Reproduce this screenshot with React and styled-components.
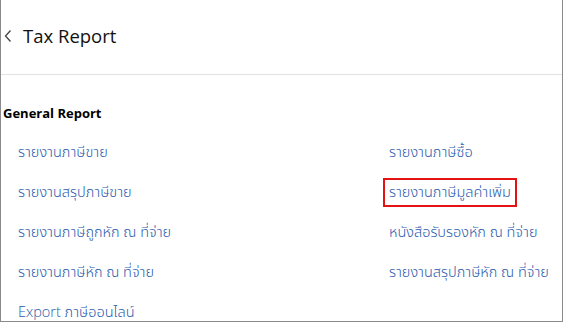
import React from "react";
import styled, { createGlobalStyle } from "styled-components";

const Global = createGlobalStyle`
  html, body { margin: 0; padding: 0; background: #fff; }
  body { font-family: "Segoe UI", "Open Sans", "Noto Sans", "Noto Sans Thai", Tahoma, sans-serif; }
`;

const Frame = styled.div`
  box-sizing: border-box;
  width: 563px;
  height: 322px;
  border-left: 1px solid #8a8a8a;
  border-right: 1px solid #8a8a8a;
  border-bottom: 1px solid #8a8a8a;
  overflow: hidden;
`;

const Header = styled.div`
  box-sizing: border-box;
  height: 75px;
  display: flex;
  align-items: center;
  gap: 10px;
  padding: 0 0 4px 2px;
  border-bottom: 1px solid #e2e2e2;
`;

const Back = styled.svg`
  width: 10px;
  height: 14px;
  margin-top: 2px;
`;

const Title = styled.h1`
  margin: 0;
  font-size: 18.5px;
  font-weight: 400;
  color: #111;
`;

const Section = styled.div`
  padding: 28px 0 0 2px;
`;

const SectionTitle = styled.div`
  font-size: 13px;
  font-weight: 700;
  color: #000;
  height: 20px;
  line-height: 20px;
`;

const Grid = styled.div`
  display: grid;
  grid-template-columns: 371px 1fr;
  grid-template-rows: 39px 40px 40px 40px 40px;
  padding-left: 15px;
  margin-top: 10px;
`;

const Cell = styled.div`
  display: flex;
  align-items: center;
`;

const Link = styled.a`
  box-sizing: border-box;
  display: inline-block;
  font-size: 14.5px;
  font-weight: 300;
  color: #2c5bae;
  text-decoration: none;
  white-space: nowrap;
  margin-left: -6px;
  padding: 3px 4px 4px;
  border: 2px solid ${(p) => (p.$active ? "#e41212" : "transparent")};
  line-height: 18px;
`;

const left = [
  "รายงานภาษีขาย",
  "รายงานสรุปภาษีขาย",
  "รายงานภาษีถูกหัก ณ ที่จ่าย",
  "รายงานภาษีหัก ณ ที่จ่าย",
  "Export ภาษีออนไลน์",
];
const right = [
  "รายงานภาษีซื้อ",
  "รายงานภาษีมูลค่าเพิ่ม",
  "หนังสือรับรองหัก ณ ที่จ่าย",
  "รายงานสรุปภาษีหัก ณ ที่จ่าย",
  null,
];

export default function App() {
  return (
    <>
      <Global />
      <Frame>
        <Header>
          <Back viewBox="0 0 10 14">
            <path d="M7.5 1.5 L2.5 7 L7.5 12.5" fill="none" stroke="#444" strokeWidth="1.3" />
          </Back>
          <Title>Tax Report</Title>
        </Header>
        <Section>
          <SectionTitle>General Report</SectionTitle>
          <Grid>
            {left.map((l, i) => (
              <React.Fragment key={i}>
                <Cell>
                  <Link href="#">{l}</Link>
                </Cell>
                <Cell>
                  {right[i] && (
                    <Link href="#" $active={i === 1}>
                      {right[i]}
                    </Link>
                  )}
                </Cell>
              </React.Fragment>
            ))}
          </Grid>
        </Section>
      </Frame>
    </>
  );
}
